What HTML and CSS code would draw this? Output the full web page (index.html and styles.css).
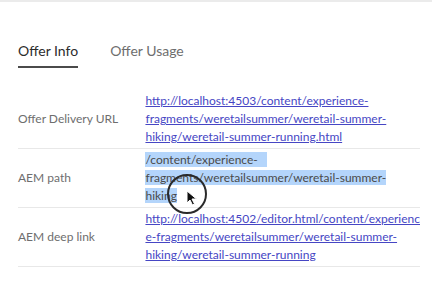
FILE: index.html
```html
<!DOCTYPE html>
<html lang="en">
<head>
    <meta charset="UTF-8">
    <meta name="viewport" content="width=device-width, initial-scale=1.0">
    <title>Offer Info</title>
    <link rel="stylesheet" href="styles.css">
</head>
<body>
    <div class="panel">
        <nav class="tabs">
            <div class="tab active">Offer Info</div>
            <div class="tab">Offer Usage</div>
        </nav>
        <table class="info">
            <tr>
                <td class="label">Offer Delivery URL</td>
                <td class="value"><a href="#">http://localhost:4503/content/experience-<br>fragments/weretailsummer/weretail-summer-<br>hiking/weretail-summer-running.html</a></td>
            </tr>
            <tr>
                <td class="label">AEM path</td>
                <td class="value"><span class="selected">/content/experience-&nbsp;&nbsp;&nbsp;</span><br><span class="selected">fragments/weretailsummer/weretail-summer-</span><br><span class="selected">hiking</span></td>
            </tr>
            <tr>
                <td class="label">AEM deep link</td>
                <td class="value"><a href="#">http://localhost:4502/editor.html/content/experienc<br>e-fragments/weretailsummer/weretail-summer-<br>hiking/weretail-summer-running</a></td>
            </tr>
        </table>
        <div class="pointer">
            <svg width="12" height="16" viewBox="0 0 12 16">
                <path d="M1 1 L1 13 L4 10 L6.5 15 L8.5 14 L6 9 L10.5 9 Z" fill="#111" stroke="#fff" stroke-width="1"/>
            </svg>
        </div>
    </div>
</body>
</html>
```

FILE: styles.css
```css
body {
    margin: 0;
    background: #fff;
    font-family: Lato, 'Open Sans', sans-serif;
    border-top: 2px solid #ebebeb;
}
.panel {
    position: relative;
    padding: 40px 12px 0 18px;
}
.tabs {
    display: flex;
    gap: 32px;
}
.tab {
    font-size: 14px;
    line-height: 18px;
    color: #6e6e6e;
    padding-bottom: 6px;
    border-bottom: 2px solid transparent;
}
.tab.active {
    color: #2c2c2c;
    border-bottom-color: #4b4b4b;
}
.info {
    margin-top: 22px;
    width: 402px;
    border-collapse: collapse;
}
.info td {
    padding: 2px 0;
    border-bottom: 1px solid #e8e8e8;
    font-size: 12px;
    line-height: 18px;
    vertical-align: middle;
}
.label {
    width: 128px;
    color: #6e6e6e;
}
.value {
    white-space: nowrap;
    color: #4a4a4a;
}
.value a {
    color: #4646c4;
    text-decoration: underline;
}
.selected {
    background: #b4d5fb;
}
.pointer {
    position: absolute;
    left: 167px;
    top: 172px;
    width: 36px;
    height: 36px;
    border: 2px solid #2a2a2a;
    border-radius: 50%;
}
.pointer svg {
    position: absolute;
    left: 17px;
    top: 14px;
}
```
